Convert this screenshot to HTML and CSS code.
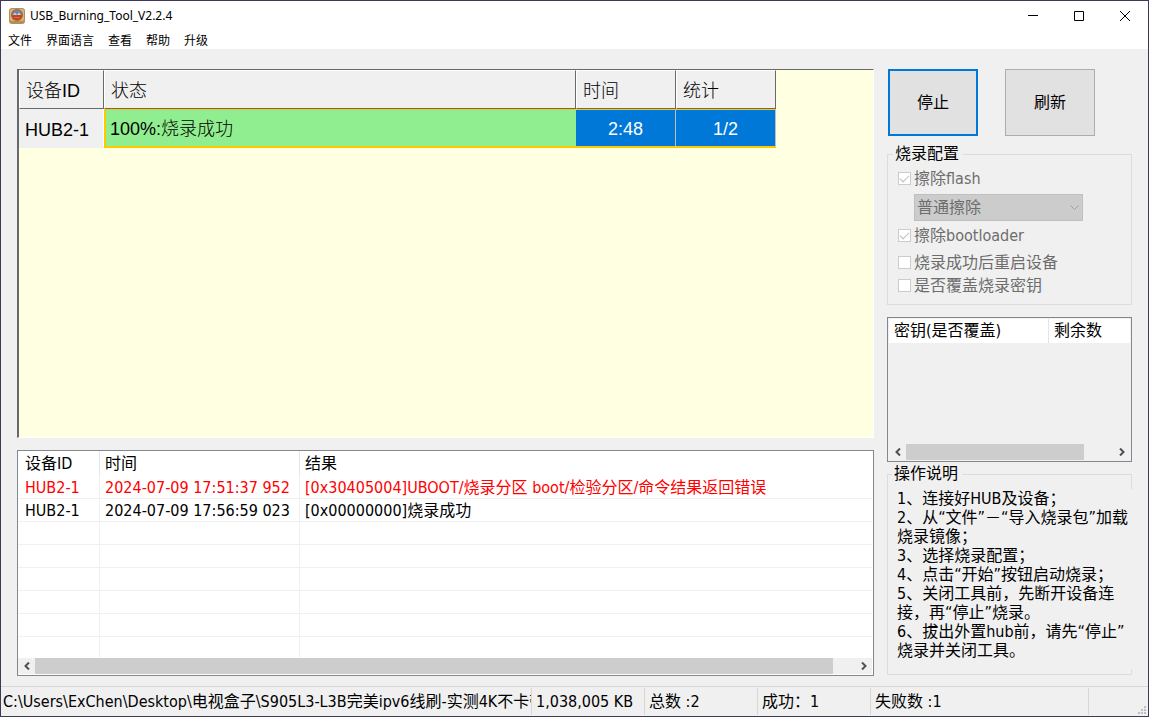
FILE: index.html
```html
<!DOCTYPE html>
<html lang="zh-CN">
<head>
<meta charset="utf-8">
<title>USB_Burning_Tool_V2.2.4</title>
<link rel="stylesheet" href="styles.css">
</head>
<body>
<div class="window">
  <header class="titlebar">
    <svg class="app-icon" viewBox="0 0 16 16" aria-hidden="true">
      <rect x="0" y="0" width="16" height="16" rx="3" fill="#b98c50"/>
      <rect x="1" y="1" width="14" height="12" rx="2" fill="#dcb57a"/>
      <circle cx="8" cy="7" r="6" fill="#8d6a55"/>
      <path d="M3 7a5 5 0 0 1 10 0z" fill="#6f87a0"/>
      <path d="M3 7a5 5 0 0 0 10 0z" fill="#c8401f"/>
      <path d="M4 7l2-2.500 2 2.500 2-2.500 2 2.500z" fill="#d8cfc8"/>
      <path d="M5 9.500h6" stroke="#e8683a" stroke-width="1"/>
    </svg>
    <h1 class="title">USB_Burning_Tool_V2.2.4</h1>
    <div class="controls">
      <button class="control" type="button" aria-label="最小化"><svg viewBox="0 0 10 10"><path d="M0 4.500h10"/></svg></button>
      <button class="control" type="button" aria-label="最大化"><svg viewBox="0 0 10 10"><path d="M.5.5h9v9h-9z"/></svg></button>
      <button class="control" type="button" aria-label="关闭"><svg viewBox="0 0 10 10"><path d="M0 0l10 10M10 0L0 10"/></svg></button>
    </div>
  </header>
  <nav class="menu">
    <button type="button">文件</button>
    <button type="button">界面语言</button>
    <button type="button">查看</button>
    <button type="button">帮助</button>
    <button type="button">升级</button>
  </nav>

  <main class="content">
    <div class="left">
      <section class="devices">
        <table class="device-table">
          <colgroup><col class="w-id"><col class="w-state"><col class="w-num"><col class="w-num"></colgroup>
          <thead><tr><th>设备ID</th><th>状态</th><th>时间</th><th>统计</th></tr></thead>
          <tbody><tr><th>HUB2-1</th><td class="success">100%:烧录成功</td><td class="selected">2:48</td><td class="selected">1/2</td></tr></tbody>
        </table>
      </section>
      <section class="log">
        <div class="log-view">
          <table class="log-table">
            <colgroup><col class="l-id"><col class="l-time"><col></colgroup>
            <thead><tr><th>设备ID</th><th>时间</th><th>结果</th></tr></thead>
            <tbody>
              <tr class="error"><td>HUB2-1</td><td>2024-07-09 17:51:37 952</td><td>[0x30405004]UBOOT/烧录分区 boot/检验分区/命令结果返回错误</td></tr>
              <tr><td>HUB2-1</td><td>2024-07-09 17:56:59 023</td><td>[0x00000000]烧录成功</td></tr>
              <tr><td></td><td></td><td></td></tr>
              <tr><td></td><td></td><td></td></tr>
              <tr><td></td><td></td><td></td></tr>
              <tr><td></td><td></td><td></td></tr>
              <tr><td></td><td></td><td></td></tr>
              <tr><td></td><td></td><td></td></tr>
            </tbody>
          </table>
        </div>
        <div class="scrollbar">
          <button type="button" aria-label="向左滚动"><svg viewBox="0 0 6 8"><path d="M5 .5L1.500 4 5 7.500"/></svg></button>
          <div class="track"><div class="thumb" style="width:97.3%"></div></div>
          <button type="button" aria-label="向右滚动"><svg viewBox="0 0 6 8"><path d="M1 .5L4.500 4 1 7.500"/></svg></button>
        </div>
      </section>
    </div>

    <div class="right">
      <div class="actions">
        <button class="action primary" type="button">停止</button>
        <button class="action" type="button">刷新</button>
      </div>
      <fieldset class="group config">
        <legend>烧录配置</legend>
        <label class="check"><input type="checkbox" checked disabled>擦除flash</label>
        <div class="select">
          <select disabled aria-label="擦除方式"><option>普通擦除</option></select>
          <svg viewBox="0 0 9 6" aria-hidden="true"><path d="M.5.5l4 4 4-4"/></svg>
        </div>
        <label class="check spaced"><input type="checkbox" checked disabled>擦除bootloader</label>
        <label class="check"><input type="checkbox" disabled>烧录成功后重启设备</label>
        <label class="check"><input type="checkbox" disabled>是否覆盖烧录密钥</label>
      </fieldset>
      <section class="keys">
        <table class="key-table">
          <colgroup><col class="k-name"><col></colgroup>
          <thead><tr><th>密钥(是否覆盖)</th><th>剩余数</th></tr></thead>
        </table>
        <div class="scrollbar">
          <button type="button" aria-label="向左滚动"><svg viewBox="0 0 6 8"><path d="M5 .5L1.500 4 5 7.500"/></svg></button>
          <div class="track"><div class="thumb" style="width:86%"></div></div>
          <button type="button" aria-label="向右滚动"><svg viewBox="0 0 6 8"><path d="M1 .5L4.500 4 1 7.500"/></svg></button>
        </div>
      </section>
      <fieldset class="group help">
        <legend>操作说明</legend>
        <div class="help-text">
          <p>1、连接好HUB及设备；</p>
          <p>2、从“文件”－“导入烧录包”加载<br>烧录镜像；</p>
          <p>3、选择烧录配置；</p>
          <p>4、点击“开始”按钮启动烧录；</p>
          <p>5、关闭工具前，先断开设备连<br>接，再“停止”烧录。</p>
          <p>6、拔出外置hub前，请先“停止”<br>烧录并关闭工具。</p>
        </div>
      </fieldset>
    </div>
  </main>

  <footer class="status">
    <div class="cell path">C:\Users\ExChen\Desktop\电视盒子\S905L3-L3B完美ipv6线刷-实测4K不卡带</div>
    <div class="cell">1,038,005 KB</div>
    <div class="cell">总数 :2</div>
    <div class="cell">成功：1</div>
    <div class="cell">失败数 :1</div>
    <svg class="grip" viewBox="0 0 8 8" aria-hidden="true"><path d="M6 0h2v2H6zM3 3h2v2H3zM6 3h2v2H6zM0 6h2v2H0zM3 6h2v2H3zM6 6h2v2H6z"/></svg>
  </footer>
</div>
</body>
</html>
```
FILE: styles.css
```css
* { box-sizing: border-box; }
body {
  margin: 0;
  color: #000;
  font: 16px/20px "DejaVu Sans Condensed", "Noto Sans CJK SC", sans-serif;
}
button { margin: 0; padding: 0; border: 0; background: none; color: inherit; font: inherit; }
th { font-weight: 400; text-align: left; }
table { border-collapse: separate; border-spacing: 0; table-layout: fixed; }

.window {
  display: flex;
  flex-direction: column;
  min-height: 100vh;
  border: 1px solid #3c3a5a;
  background: #f0f0f0;
}

/* Title bar and menu */
.titlebar { display: flex; align-items: center; height: 30px; padding-left: 8px; background: #fff; }
.app-icon { width: 16px; height: 16px; }
.title { flex: 1; margin: 0; padding-left: 5px; font: 12px/20px "Noto Sans", sans-serif; }
.controls { display: flex; }
.control { display: flex; justify-content: center; align-items: center; width: 46px; height: 30px; }
.control svg { width: 10px; height: 10px; overflow: visible; fill: none; stroke: #000; }
.menu {
  display: flex;
  gap: 14px;
  height: 18px;
  padding-left: 7px;
  background: #fff;
  font: 12px/18px "Noto Sans CJK SC", sans-serif;
}

.content {
  flex: 1;
  display: grid;
  grid-template-columns: 1fr 245px;
  gap: 13px;
  padding: 20px 16px 10px;
}
.left { display: flex; flex-direction: column; gap: 12px; min-width: 0; }

/* Device grid */
.devices {
  flex: 1;
  min-height: 369px;
  border: 1px solid #fff;
  border-top-color: #696969;
  border-left: 2px solid #696969;
  background: #ffffe1;
}
.device-table { width: 757px; font: 18px/24px "Liberation Sans", "Noto Sans CJK SC", sans-serif; }
.w-id { width: 85px; }
.w-state { width: 472px; }
.w-num { width: 100px; }
.device-table th, .device-table td { padding: 2px 6px 0; }
.device-table thead th {
  height: 39px;
  border: 1px solid #696969;
  border-top-color: #fff;
  border-left-color: #fff;
  background: #f0f0f0;
  font-weight: 300;
}
.device-table tbody th { border-right: 1px solid #fff; background: #f0f0f0; }
.device-table tbody td { height: 39px; border-top: 1px solid #ffc800; border-bottom: 2px solid #ffc800; }
.device-table .success { padding-left: 4px; border-left: 2px solid #ffc800; background: #90ee90; font-weight: 300; }
.device-table .selected { border-right: 1px solid #c0c0c0; background: #0078d7; color: #fff; text-align: center; }

/* Log list */
.log { display: flex; flex-direction: column; height: 226px; padding: 0 1px 1px 0; border: 1px solid #828790; background: #fff; }
.log-view { flex: 1; overflow: hidden; }
.log-table { width: 100%; white-space: nowrap; }
.l-id { width: 82px; }
.l-time { width: 200px; }
.log-table th { height: 25px; padding: 0 5px; border-right: 1px solid #e5e5e5; }
.log-table td { height: 23px; padding: 1px 5px 0; border-right: 1px solid #f0f0f0; border-bottom: 1px solid #f0f0f0; }
.log-table th:first-child, .log-table td:first-child { padding-left: 7px; }
.log-table th:last-child, .log-table td:last-child { border-right: 0; }
.error { color: #f00; }

/* Scroll bars */
.scrollbar { display: flex; height: 16px; background: #f0f0f0; }
.scrollbar button { display: flex; justify-content: center; align-items: center; width: 17px; }
.scrollbar svg { width: 6px; height: 8px; fill: none; stroke: #505050; stroke-width: 2; }
.track { flex: 1; }
.thumb { height: 100%; background: #cdcdcd; }

/* Right column */
.right { display: flex; flex-direction: column; }
.actions { display: flex; justify-content: space-between; padding: 0 37px 0 1px; }
.action { width: 90px; height: 67px; border: 1px solid #adadad; background: #e1e1e1; }
.action.primary { border: 2px solid #0078d7; }
.group { min-width: 0; margin: 0; border: 1px solid #dcdcdc; }
.group legend { margin-left: -5px; padding: 0 4px 0 2px; }
.config { height: 161px; margin-top: 8px; padding: 3px 10px 0; }
.check { display: flex; align-items: center; gap: 3px; height: 23px; color: #6d6d6d; white-space: nowrap; }
.check input {
  appearance: none;
  width: 13px;
  height: 13px;
  margin: 0;
  border: 1px solid #ccc;
  background: #fff;
}
.check input:checked::before {
  content: "";
  display: block;
  width: 8px;
  height: 4px;
  margin: 2px 1px;
  border: solid #bcbcbc;
  border-width: 0 0 1px 1px;
  transform: rotate(-45deg);
}
.select { display: grid; align-items: center; width: 169px; margin: 4px 0 3px 16px; }
.select > * { grid-area: 1 / 1; }
.select select {
  appearance: none;
  width: 100%;
  height: 27px;
  padding: 0 2px;
  border: 1px solid #bfbfbf;
  border-radius: 0;
  background: #ccc;
  color: #6d6d6d;
  font: inherit;
  opacity: 1;
}
.select svg { justify-self: end; width: 9px; height: 6px; margin-right: 4px; fill: none; stroke: #a0a0a0; }
.spaced { margin-bottom: 4px; }

.keys { display: flex; flex-direction: column; justify-content: space-between; height: 145px; margin-top: 12px; padding: 1px; border: 1px solid #828790; }
.key-table { width: 100%; background: #fff; }
.k-name { width: 160px; }
.key-table th { height: 24px; padding: 0 5px; border-right: 1px solid #e5e5e5; }
.key-table th:last-child { border-right: 0; }

.help { margin-top: 2px; padding: 5px 0 5px 9px; }
.help-text { margin-right: -1px; padding-bottom: 9px; background: #f0f0f0; line-height: 19px; white-space: nowrap; }
.help-text p { margin: 0; }

/* Status bar */
.status {
  display: grid;
  grid-template-columns: 1fr 113px 113px 113px 218px 59px;
  align-items: center;
  height: 30px;
  border-top: 1px solid #d7d7d7;
}
.cell { height: 27px; padding-left: 4px; border-right: 1px solid #d7d7d7; line-height: 28px; white-space: nowrap; overflow: hidden; }
.path { padding-left: 2px; }
.grip { align-self: end; justify-self: end; width: 8px; height: 8px; margin: 0 2px 2px; fill: #bfbfbf; }
```
